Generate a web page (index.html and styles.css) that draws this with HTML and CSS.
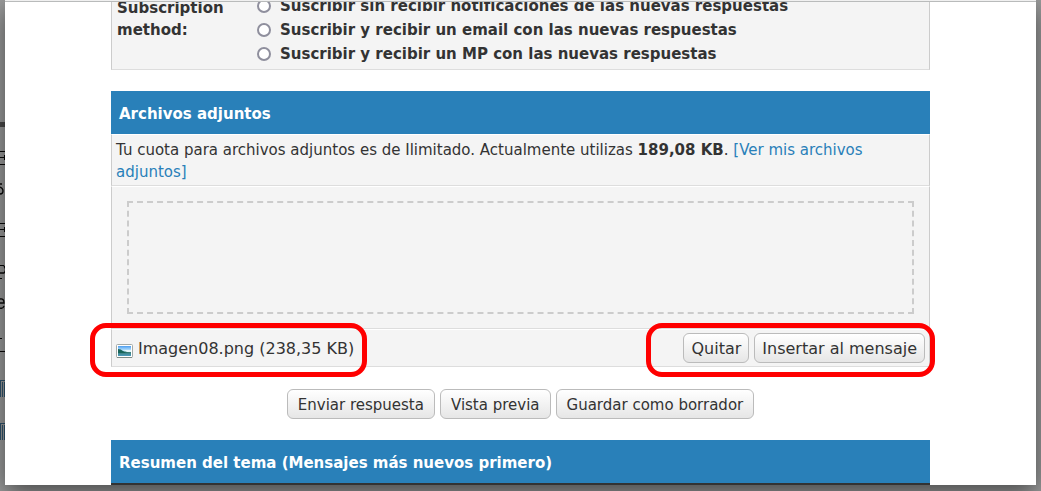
FILE: index.html
```html
<!DOCTYPE html>
<html lang="es">
<head>
<meta charset="utf-8">
<title>Archivos adjuntos</title>
<link rel="stylesheet" href="styles.css">
</head>
<body>
<div class="backdrop" aria-hidden="true">
  <svg class="edge" width="5" height="491" viewBox="0 0 5 491">
    <rect y="122" width="5" height="5" fill="#4a4a4a"/>
    <path d="M0 151.5h5M0 164.5h5M0 157.5h5M4.5 155v5M0 223.500h5M0 236.500h5M0 229.500h5M4.500 227v5M0 265.500h4M0 278.500h2M0 338.500h2M0 351.500h5" stroke="#080808" fill="none"/>
    <path d="M4 266q3 4 0 7H0M0 299q4-1 4 4H0M0 308q3 1 4-2M2 184H0M0 187q3 1 3 4t-3 3" stroke="#080808" stroke-width="1.300" fill="none"/>
    <path d="M0 380.500h5M.5 380v17M2.500 382v15M4.500 382v15M0 423.500h5M.5 423v17M2.500 425v15M4.500 425v15" stroke="#315670" fill="none"/>
  </svg>
</div>
<main class="modal">
  <div class="topline"></div>
  <div class="content">
    <section class="panel subscription">
      <div class="label">Subscription method:</div>
      <div class="options">
        <label class="option"><input type="radio" name="sub" class="radio">Suscribir sin recibir notificaciones de las nuevas respuestas</label>
        <label class="option"><input type="radio" name="sub" class="radio">Suscribir y recibir un email con las nuevas respuestas</label>
        <label class="option"><input type="radio" name="sub" class="radio">Suscribir y recibir un MP con las nuevas respuestas</label>
      </div>
    </section>

    <section class="attachments">
      <h2 class="heading">Archivos adjuntos</h2>
      <p class="row quota">Tu cuota para archivos adjuntos es de Ilimitado. Actualmente utilizas <strong>189,08 KB</strong>. <a class="link" href="#">[Ver mis archivos adjuntos]</a></p>
      <div class="row drop"><div class="dropzone"></div></div>
      <div class="row file">
        <svg class="icon" width="17" height="14" viewBox="0 0 17 14">
          <defs>
            <linearGradient id="sky" x2="0" y2="1"><stop offset="0" stop-color="#4c9df0"/><stop offset=".5" stop-color="#cdefff"/><stop offset=".6" stop-color="#397c70"/><stop offset="1" stop-color="#4b9cc0"/></linearGradient>
          </defs>
          <rect x=".5" y=".5" width="16" height="13" rx="1" fill="#fff" stroke="#a3aaa8"/>
          <rect x="2" y="2" width="13" height="10" fill="url(#sky)"/>
          <path d="M2 5q3 0 5 2t6 2H2z" fill="#17655a"/>
          <path d="M8 6h7v2h-4z" fill="#e4f6fb"/>
          <path d="M1 13.500h15" stroke="#7e8b86"/>
        </svg>
        <span class="name">Imagen08.png (238,35 KB)</span>
        <button type="button" class="button">Quitar</button>
        <button type="button" class="button">Insertar al mensaje</button>
        <span class="mark mark-left"></span>
        <span class="mark mark-right"></span>
      </div>
    </section>

    <div class="actions">
      <button type="button" class="button">Enviar respuesta</button>
      <button type="button" class="button">Vista previa</button>
      <button type="button" class="button">Guardar como borrador</button>
    </div>

    <h2 class="heading summary">Resumen del tema (Mensajes más nuevos primero)</h2>
  </div>
</main>
</body>
</html>
```
FILE: styles.css
```css
* { box-sizing: border-box; }

body {
  min-height: 100vh;
  margin: 0;
  background: #9c9d9d;
  color: #333;
  font: 15px/22px "DejaVu Sans", Verdana, sans-serif;
}

.backdrop {
  position: absolute;
  inset: 0;
  overflow: hidden;
}

.edge {
  display: block;
}

.modal {
  position: relative;
  margin: 0 5px;
  background: #fff;
  box-shadow: 0 8px 24px rgba(0, 0, 0, .55);
}

.topline {
  position: absolute;
  inset: 0 0 auto;
  height: 2px;
  background: #f0f0f0;
  border-bottom: 1px solid #b9bbbb;
  z-index: 1;
}

.content {
  padding: 0 106px;
  overflow: hidden;
}

.panel {
  background: #f4f4f4;
  border: 1px solid #ccc;
  border-top: 0;
  border-bottom-color: #ddd;
}

.subscription {
  display: flex;
  padding-bottom: 3px;
  margin-bottom: 21px;
  font-weight: bold;
}

.label {
  width: 140px;
  margin-top: -3px;
  padding: 0 20px 0 5px;
}

.options {
  display: grid;
  grid-auto-rows: 24px;
  margin-top: -6px;
}

.option {
  display: flex;
  align-items: center;
  gap: 9px;
  padding-left: 5px;
  white-space: nowrap;
}

.radio {
  appearance: none;
  width: 14px;
  height: 14px;
  margin: 0;
  border: 2px solid #8f8f9d;
  border-radius: 50%;
  background: #fff;
}

.heading {
  margin: 0;
  padding: 12px 8px 9px;
  background: #2980b9;
  color: #fff;
  font-size: 15px;
  line-height: 22px;
  font-weight: bold;
}

.row {
  margin: 0;
  background: #f4f4f4;
  border: 1px solid #ccc;
  border-top-color: #fff;
  border-bottom-color: #ddd;
}

.quota {
  padding: 4px 4px 2px;
}

.link {
  color: #2980b9;
  text-decoration: none;
}

.drop {
  padding: 14px 15px;
}

.dropzone {
  height: 113px;
  border: 2px dashed #ccc;
}

.file {
  position: relative;
  display: flex;
  align-items: center;
  gap: 5px;
  padding: 3px 4px;
  font-size: 16px;
}

.icon {
  margin-top: 5px;
}

.name {
  flex: 1;
  padding-top: 2px;
}

.button {
  height: 30px;
  padding: 0 9px;
  border: 1px solid #bbb;
  border-radius: 6px;
  background: linear-gradient(#fff, #e6e6e6);
  color: #333;
  font: inherit;
}

.actions .button {
  padding: 2px 10px 0;
}

.file .button {
  padding: 2px 7px 0;
}

.mark {
  position: absolute;
  top: -7px;
  bottom: -11px;
  border: 5px solid #f00;
  border-radius: 16px;
  pointer-events: none;
}

.mark-left {
  left: -22px;
  width: 277px;
}

.mark-right {
  right: -6px;
  width: 289px;
}

.actions {
  display: flex;
  justify-content: center;
  gap: 5px;
  padding: 22px 0 21px;
}

.summary {
  border-bottom: 2px solid #333;
}
```
